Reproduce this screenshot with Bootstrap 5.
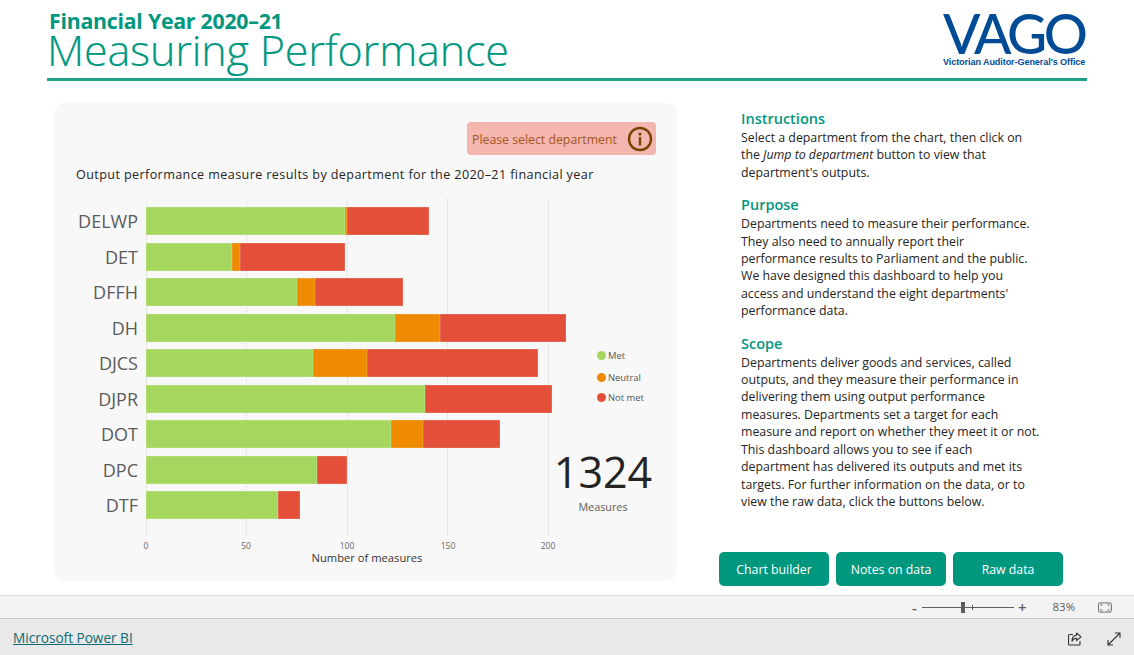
<!DOCTYPE html>
<html lang="en">
<head>
<meta charset="utf-8">
<title>Measuring Performance</title>
<link href="https://cdn.jsdelivr.net/npm/bootstrap@5.3.0/dist/css/bootstrap.min.css" rel="stylesheet">
<style>
html,body{height:655px;overflow:hidden}
body{font-family:"Open Sans","Noto Sans",sans-serif;background:#fff;color:#252423;width:1134px}
.report{height:595px}
.topbar{margin:0 47px;height:81px;border-bottom:3px solid #1fa28c;color:#00977f}
.yr{font-size:21.3px;font-weight:700;line-height:22px;margin:10px 0 0 2px;letter-spacing:-.25px}
.ttl{font-size:43.1px;font-weight:300;line-height:36px;margin:0;letter-spacing:-.2px;font-family:"Open Sans",sans-serif;-webkit-text-stroke:.2px #00977f;white-space:nowrap}
.logo{width:142px;color:#004b96;margin-right:2px}
.logo-big{font-family:"Lato",sans-serif;font-size:55px;line-height:40px;height:40px;margin-top:13px;letter-spacing:-3.4px;font-weight:500;white-space:nowrap}
.logo-sub{font-family:"Liberation Sans",sans-serif;font-size:9.1px;line-height:11px;font-weight:700;margin-top:4px;white-space:nowrap;letter-spacing:-.1px}
.panel{margin:22px 0 0 54px;width:623px;height:478px;background:#f8f8f8;border-radius:11px;padding:19px 21px 0 22px}
.pick{height:33px;width:189px;background:#f4b6ae;color:#a5551f;border-radius:4px;padding:0 3px 0 5px;font-size:12.3px}
.pick span{padding-top:4px}
.cap{font-size:12.6px;line-height:18px;margin:11px 0 0;letter-spacing:.39px}
.plot{margin-top:14.5px;height:337px;position:relative}
.grid-l{position:absolute;top:0;height:337px;border-left:1px dotted #d8d8d8;width:0}
.rw{height:35.5px;align-items:center;padding-top:10px;position:relative}
.dep{width:62px;text-align:right;font-size:18px;line-height:28px;color:#5b5b5b;margin-right:8px;flex:none}
.bars{height:28px}
.bars>span{display:block;height:100%;box-shadow:inset 0 0 0 .5px rgba(255,255,255,.25)}
.c-m{background:#a5d75f}.c-n{background:#ee8b00}.c-x{background:#e34f39}
.ticks{position:relative;height:12px;margin:4.500px 0 0 70px}
.ticks span{position:absolute;transform:translateX(-50%);font-size:8.5px;color:#666;line-height:12px}
.axt{font-size:11.2px;line-height:14px;text-align:center;margin-left:70px;width:442px;color:#333;margin-top:-1px}
.side{position:absolute;left:449px;top:0;width:200px;height:337px}
.lg{position:absolute;left:72px;font-size:9.4px;line-height:12px;color:#555;white-space:nowrap}
.lg i{display:inline-block;width:9px;height:9px;border-radius:50%;margin-right:2px;vertical-align:-1px}
.kpi{position:absolute;left:28px;top:248px;width:100px;text-align:center}
.kpi b{display:block;font-weight:400;font-size:43px;line-height:50px;color:#252423}
.kpi small{display:block;font-size:10.8px;line-height:16px;color:#605e5c;margin-top:2px}
.about{width:457px;padding-left:64px;margin-top:28px;height:478px;position:relative}
.about h2{font-size:14.5px;font-weight:600;line-height:20px;color:#00977f;margin:0}
.about p{font-size:12.35px;line-height:17.4px;margin:0 0 15px;white-space:nowrap;color:#252423}
.about section+section{margin-top:-1px}
.acts{margin:-10px 0 0 -22px;position:absolute;top:453px;left:64px;gap:7px}
.act{width:110px;height:34px;padding:1px 0 0;background:#00977f;border:0;border-radius:5px;color:#fff;font-size:12.3px;line-height:33px}
.zoombar{height:24px;background:#f3f3f3;border-top:1px solid #dedede;border-bottom:1px solid #c8c8c8;font-size:11.5px;color:#605e5c}
.zm{margin-left:912px;width:200px;height:22px}
.zm b{font-size:15px;font-weight:600;line-height:15px}
.trk{width:100px;height:1px;background:#605e5c;position:relative;margin:0 4px 0 5px}
.trk::before{content:"";position:absolute;left:39px;top:-5px;width:4px;height:11px;background:#605e5c}
.trk::after{content:"";position:absolute;left:50px;top:-2px;width:1px;height:5px;background:#605e5c}
.pct{margin-left:26px}
.foot{height:36px;background:#e9e9e9;padding:3px 13px 0}
.foot a{color:#0b6a72;font-size:13.6px;font-weight:500}
</style>
</head>
<body class="d-flex flex-column">
<div class="report">
  <header class="topbar d-flex justify-content-between">
    <div>
      <div class="yr">Financial Year 2020–21</div>
      <h1 class="ttl">Measuring Performance</h1>
    </div>
    <div class="logo">
      <div class="logo-big">VAGO</div>
      <div class="logo-sub">Victorian Auditor-General's Office</div>
    </div>
  </header>
  <div class="d-flex">
    <section class="panel">
      <div class="d-flex justify-content-end">
        <div class="pick d-flex align-items-center justify-content-between">
          <span>Please select department</span>
          <svg width="26" height="26" viewBox="0 0 26 26" aria-hidden="true"><circle cx="13" cy="13" r="11" fill="none" stroke="#7a4300" stroke-width="2.4"/><circle cx="13" cy="8" r="1.6" fill="#7a4300"/><rect x="11.8" y="11" width="2.4" height="8.5" fill="#7a4300"/></svg>
        </div>
      </div>
      <p class="cap">Output performance measure results by department for the 2020–21 financial year</p>
      <div class="plot">
        <span class="grid-l" style="left:70px"></span><span class="grid-l" style="left:170px"></span><span class="grid-l" style="left:271px"></span><span class="grid-l" style="left:371px"></span><span class="grid-l" style="left:472px"></span>
        <div class="d-flex rw"><div class="dep">DELWP</div><div class="bars d-flex"><span class="c-m" style="width:199px"></span><span class="c-n" style="width:2px"></span><span class="c-x" style="width:82px"></span></div></div>
        <div class="d-flex rw"><div class="dep">DET</div><div class="bars d-flex"><span class="c-m" style="width:86px"></span><span class="c-n" style="width:8px"></span><span class="c-x" style="width:105px"></span></div></div>
        <div class="d-flex rw"><div class="dep">DFFH</div><div class="bars d-flex"><span class="c-m" style="width:151px"></span><span class="c-n" style="width:18px"></span><span class="c-x" style="width:88px"></span></div></div>
        <div class="d-flex rw"><div class="dep">DH</div><div class="bars d-flex"><span class="c-m" style="width:249px"></span><span class="c-n" style="width:45px"></span><span class="c-x" style="width:126px"></span></div></div>
        <div class="d-flex rw"><div class="dep">DJCS</div><div class="bars d-flex"><span class="c-m" style="width:167px"></span><span class="c-n" style="width:54px"></span><span class="c-x" style="width:171px"></span></div></div>
        <div class="d-flex rw"><div class="dep">DJPR</div><div class="bars d-flex"><span class="c-m" style="width:279px"></span><span class="c-x" style="width:127px"></span></div></div>
        <div class="d-flex rw"><div class="dep">DOT</div><div class="bars d-flex"><span class="c-m" style="width:245px"></span><span class="c-n" style="width:32px"></span><span class="c-x" style="width:77px"></span></div></div>
        <div class="d-flex rw"><div class="dep">DPC</div><div class="bars d-flex"><span class="c-m" style="width:171px"></span><span class="c-x" style="width:30px"></span></div></div>
        <div class="d-flex rw"><div class="dep">DTF</div><div class="bars d-flex"><span class="c-m" style="width:132px"></span><span class="c-x" style="width:22px"></span></div></div>
        <div class="side">
          <div class="lg" style="top:151px"><i class="c-m"></i>Met</div>
          <div class="lg" style="top:173px"><i class="c-n"></i>Neutral</div>
          <div class="lg" style="top:193px"><i class="c-x"></i>Not met</div>
          <div class="kpi"><b>1324</b><small>Measures</small></div>
        </div>
      </div>
      <div class="ticks"><span style="left:0">0</span><span style="left:100px">50</span><span style="left:201px">100</span><span style="left:302px">150</span><span style="left:402px">200</span></div>
      <div class="axt">Number of measures</div>
    </section>
    <aside class="about">
      <section>
        <h2>Instructions</h2>
        <p>Select a department from the chart, then click on<br>the <em>Jump to department</em> button to view that<br>department's outputs.</p>
      </section>
      <section>
        <h2>Purpose</h2>
        <p>Departments need to measure their performance.<br>They also need to annually report their<br>performance results to Parliament and the public.<br>We have designed this dashboard to help you<br>access and understand the eight departments'<br>performance data.</p>
      </section>
      <section>
        <h2>Scope</h2>
        <p>Departments deliver goods and services, called<br>outputs, and they measure their performance in<br>delivering them using output performance<br>measures. Departments set a target for each<br>measure and report on whether they meet it or not.<br>This dashboard allows you to see if each<br>department has delivered its outputs and met its<br>targets. For further information on the data, or to<br>view the raw data, click the buttons below.</p>
      </section>
      <div class="acts d-flex">
        <button type="button" class="btn act">Chart builder</button>
        <button type="button" class="btn act">Notes on data</button>
        <button type="button" class="btn act">Raw data</button>
      </div>
    </aside>
  </div>
</div>
<div class="zoombar">
  <div class="zm d-flex align-items-center">
    <b>-</b><div class="trk"></div><b>+</b><span class="pct">83%</span>
    <svg width="15" height="11" viewBox="0 0 15 11" aria-hidden="true" style="margin-left:23px"><rect x=".5" y=".5" width="14" height="10" rx="1.5" fill="none" stroke="#605e5c"/><path d="M3 4V2.5H5M10 2.5H12V4M12 7V8.5H10M5 8.5H3V7" fill="none" stroke="#605e5c" stroke-width=".8"/></svg>
  </div>
</div>
<footer class="foot d-flex align-items-center">
  <a href="#">Microsoft Power BI</a>
  <svg class="ms-auto" width="14" height="14" viewBox="0 0 14 14" aria-hidden="true" style="margin-right:25px"><path d="M5 2.500H1.500a1 1 0 0 0-1 1V12a1 1 0 0 0 1 1H11a1 1 0 0 0 1-1V9" fill="none" stroke="#333" stroke-width="1.1"/><path d="M8.500 1 13 4.800 8.500 8.500V6.300C6.500 6.300 5 7.200 4 9.300 4 6 5.800 3.500 8.500 3.300Z" fill="none" stroke="#333" stroke-width="1.1" stroke-linejoin="round"/></svg>
  <svg width="14" height="14" viewBox="0 0 14 14" aria-hidden="true"><path d="M1 13 13 1M8 1h5v5M1 8v5h5" fill="none" stroke="#333" stroke-width="1.1"/></svg>
</footer>
<script src="https://cdn.jsdelivr.net/npm/bootstrap@5.3.0/dist/js/bootstrap.bundle.min.js"></script>
</body>
</html>
